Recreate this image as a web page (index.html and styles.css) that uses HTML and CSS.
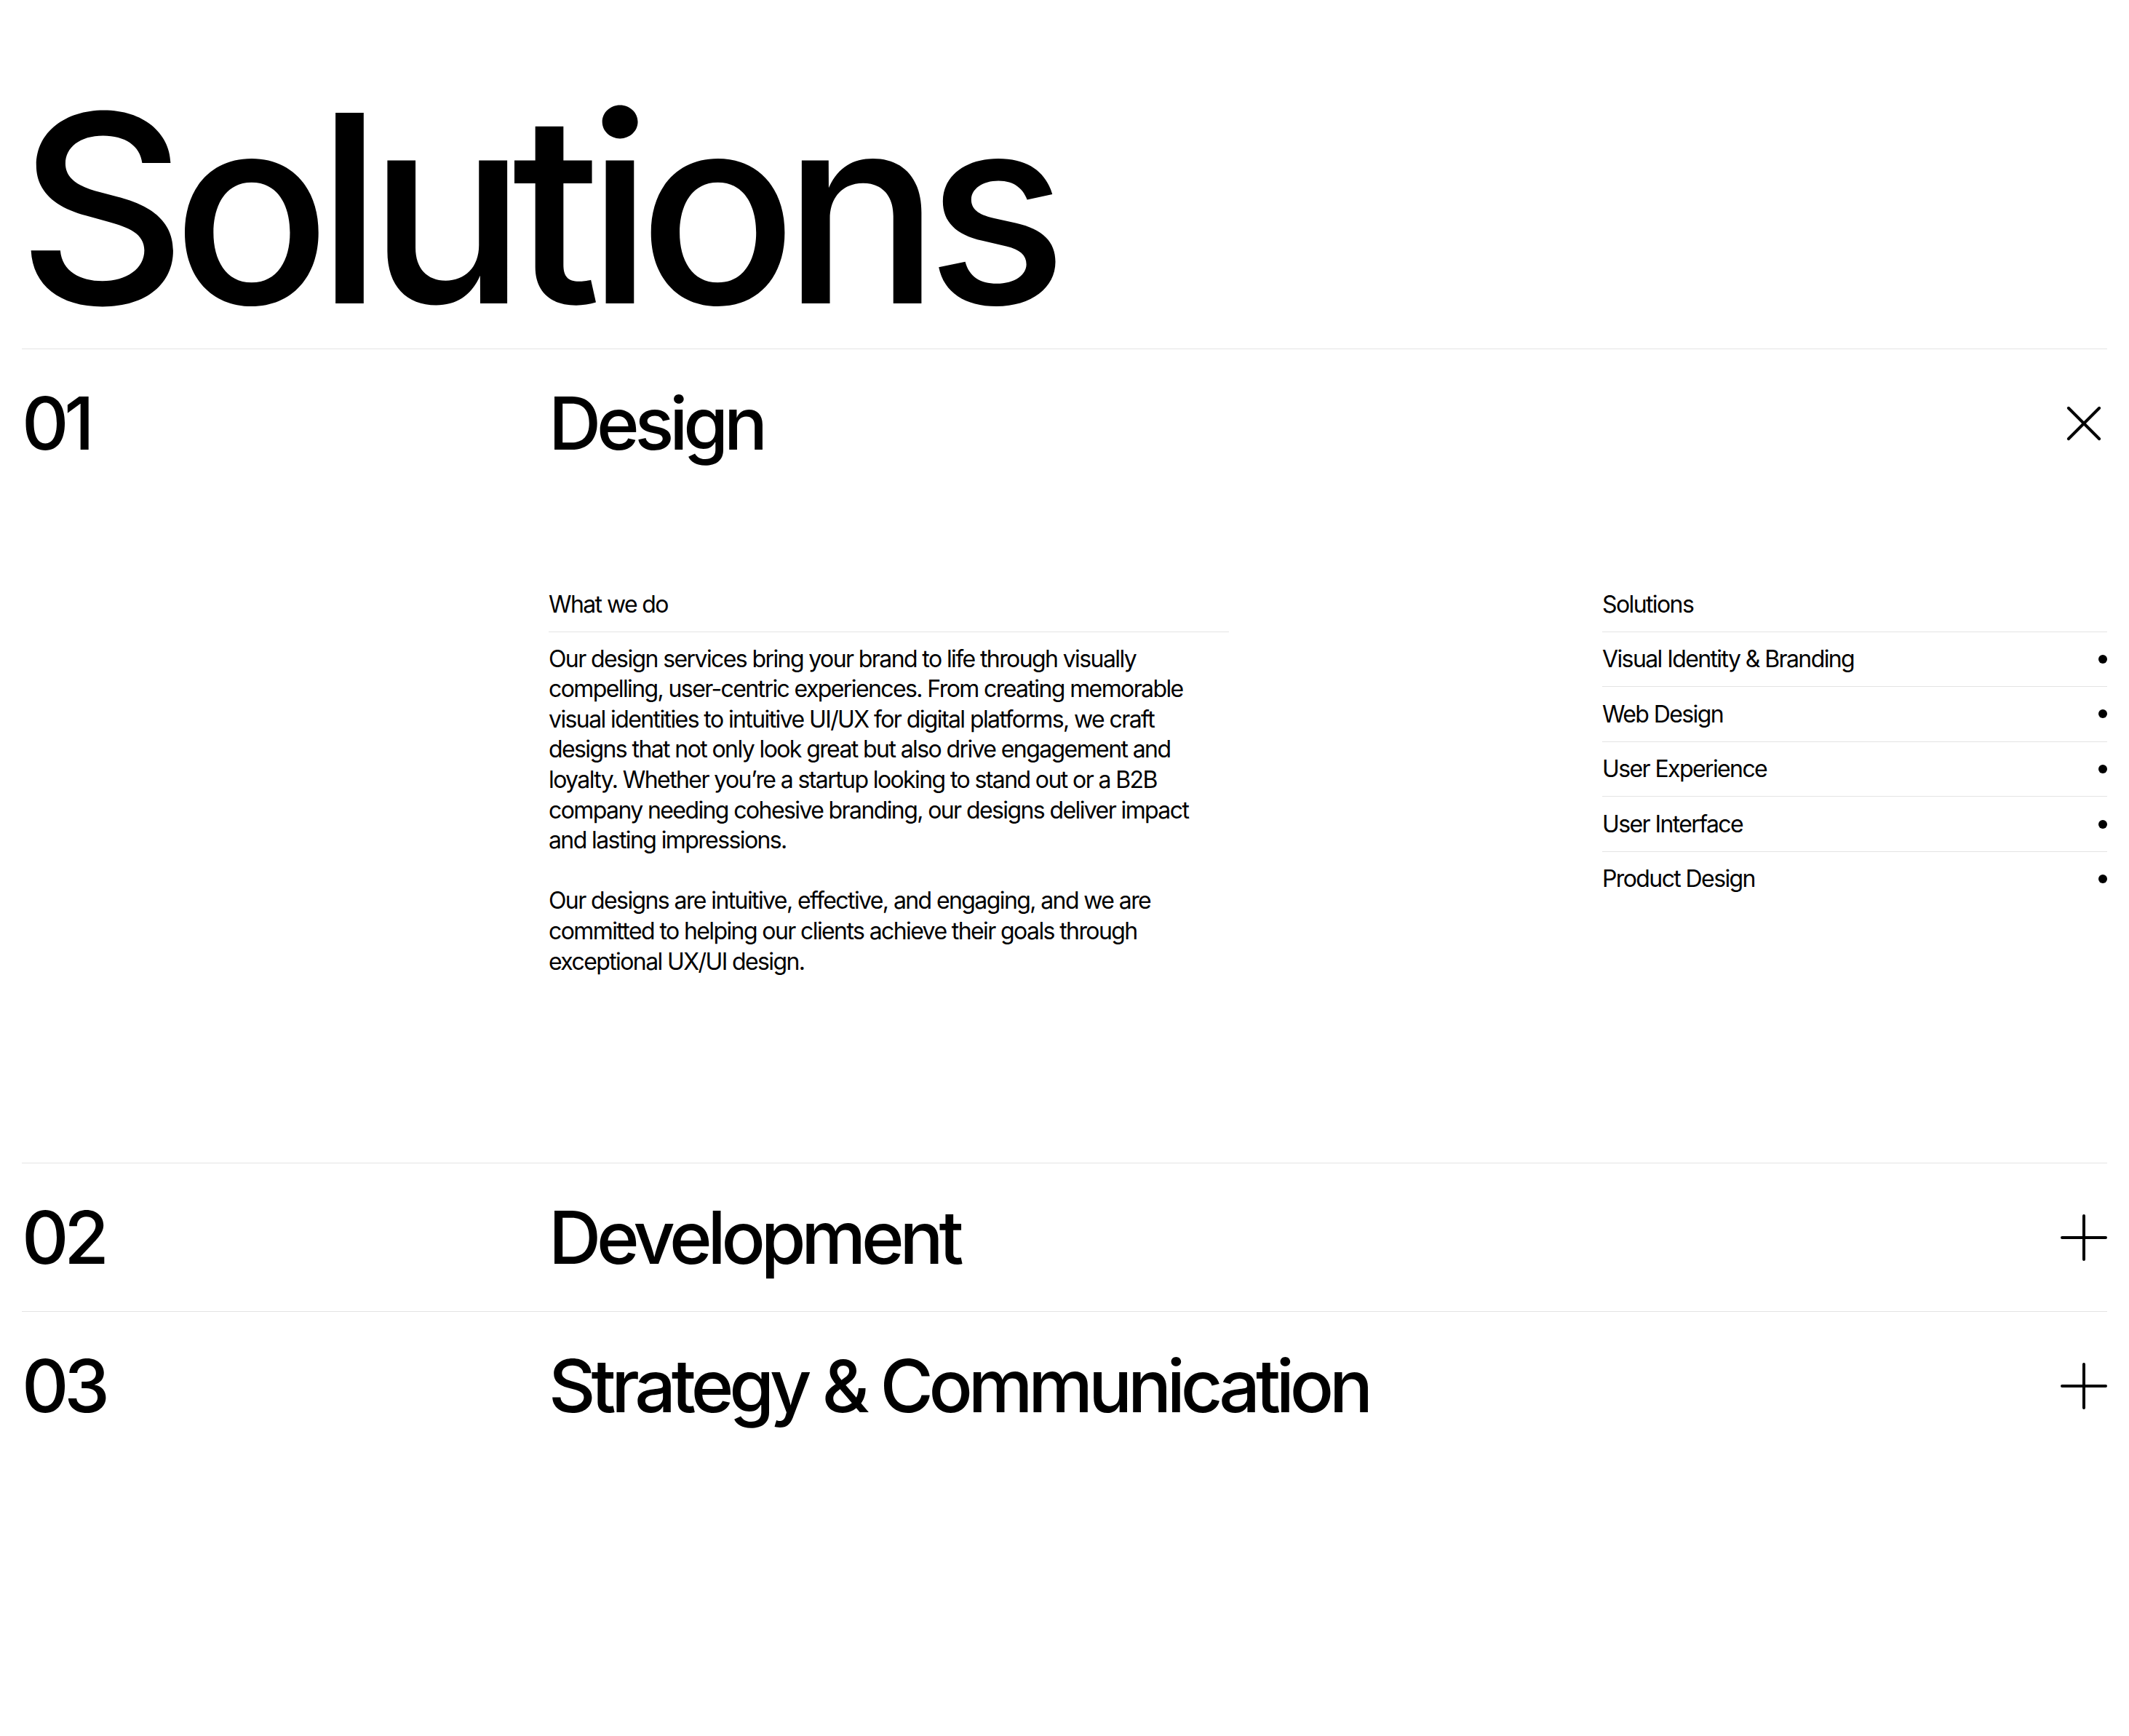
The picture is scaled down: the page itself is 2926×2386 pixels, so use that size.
FILE: index.html
```html
<!DOCTYPE html>
<html lang="en">
<head>
<meta charset="utf-8">
<title>Solutions</title>
<link rel="stylesheet" href="styles.css">
</head>
<body>
<main class="page">
  <h1 class="title">Solutions</h1>
  <section class="accordion">
    <article class="item is-open">
      <header class="item-head">
        <span class="item-num">01</span>
        <h2 class="item-name">Design</h2>
        <span class="item-icon is-close">
          <svg viewBox="0 0 64 64" width="64" height="64" aria-hidden="true"><path d="M32 2V62M2 32H62" /></svg>
        </span>
      </header>
      <div class="item-body">
        <div class="about">
          <div class="label">What we do</div>
          <p>Our design services bring your brand to life through visually compelling, user-centric experiences. From creating memorable visual identities to intuitive UI/UX for digital platforms, we craft designs that not only look great but also drive engagement and loyalty. Whether you’re a startup looking to stand out or a B2B company needing cohesive branding, our designs deliver impact and lasting impressions.</p>
          <p>Our designs are intuitive, effective, and engaging, and we are committed to helping our clients achieve their goals through exceptional UX/UI design.</p>
        </div>
        <div class="services">
          <div class="label">Solutions</div>
          <ul class="service-list">
            <li>Visual Identity &amp; Branding<span class="dot"></span></li>
            <li>Web Design<span class="dot"></span></li>
            <li>User Experience<span class="dot"></span></li>
            <li>User Interface<span class="dot"></span></li>
            <li>Product Design<span class="dot"></span></li>
          </ul>
        </div>
      </div>
    </article>
    <article class="item">
      <header class="item-head">
        <span class="item-num">02</span>
        <h2 class="item-name">Development</h2>
        <span class="item-icon">
          <svg viewBox="0 0 64 64" width="64" height="64" aria-hidden="true"><path d="M32 2V62M2 32H62" /></svg>
        </span>
      </header>
    </article>
    <article class="item">
      <header class="item-head">
        <span class="item-num">03</span>
        <h2 class="item-name">Strategy &amp; Communication</h2>
        <span class="item-icon">
          <svg viewBox="0 0 64 64" width="64" height="64" aria-hidden="true"><path d="M32 2V62M2 32H62" /></svg>
        </span>
      </header>
    </article>
  </section>
</main>
</body>
</html>
```

FILE: styles.css
```css
* { box-sizing: border-box; }

html, body {
  margin: 0;
  padding: 0;
  background: #fff;
}

body {
  font-family: Inter, "Noto Sans", "Liberation Sans", sans-serif;
  color: #000;
}

.page {
  padding: 106px 30px 200px;
}

.title {
  margin: 0 0 13px -6px;
  font-size: 360px;
  line-height: 1;
  font-weight: 500;
  letter-spacing: -0.054em;
}

.accordion {
  display: flex;
  flex-direction: column;
}

.item {
  border-top: 1px solid #e4e4e4;
}

.item-head {
  display: grid;
  grid-template-columns: repeat(12, 1fr);
  column-gap: 30px;
  align-items: center;
  padding: 47px 0 46px;
}

.item-num,
.item-name {
  font-size: 100px;
  line-height: 1.1;
  font-weight: 500;
  letter-spacing: -0.062em;
  margin: 0;
}

.item-num { grid-column: 1 / 4; }
.item-name { grid-column: 4 / 12; }

.item-icon {
  grid-column: 12 / 13;
  justify-self: end;
  display: flex;
  width: 64px;
  height: 64px;
}

.item-icon svg {
  display: block;
  fill: none;
  stroke: #000;
  stroke-width: 4;
  stroke-linecap: round;
}

.item-icon.is-close svg {
  transform: rotate(45deg);
}

.item-body {
  display: grid;
  grid-template-columns: repeat(12, 1fr);
  column-gap: 30px;
  padding: 127px 0 256px;
  font-size: 32px;
  line-height: 1.3;
  letter-spacing: -0.05em;
}

.about { grid-column: 4 / 8; }
.services { grid-column: 10 / 13; }

.label {
  padding-bottom: 16px;
  border-bottom: 1px solid #e4e4e4;
}

.about p {
  margin: 16px 0 41.6px;
}

.about p + p {
  margin-top: 0;
}

.about p:last-child {
  margin-bottom: 0;
}

.service-list {
  list-style: none;
  margin: 0;
  padding: 0;
}

.service-list li {
  display: flex;
  align-items: center;
  justify-content: space-between;
  padding: 16.5px 0;
  border-bottom: 1px solid #e4e4e4;
}

.service-list li:last-child {
  border-bottom: none;
}

.dot {
  width: 12px;
  height: 12px;
  border-radius: 50%;
  background: #000;
  flex: none;
}
```
